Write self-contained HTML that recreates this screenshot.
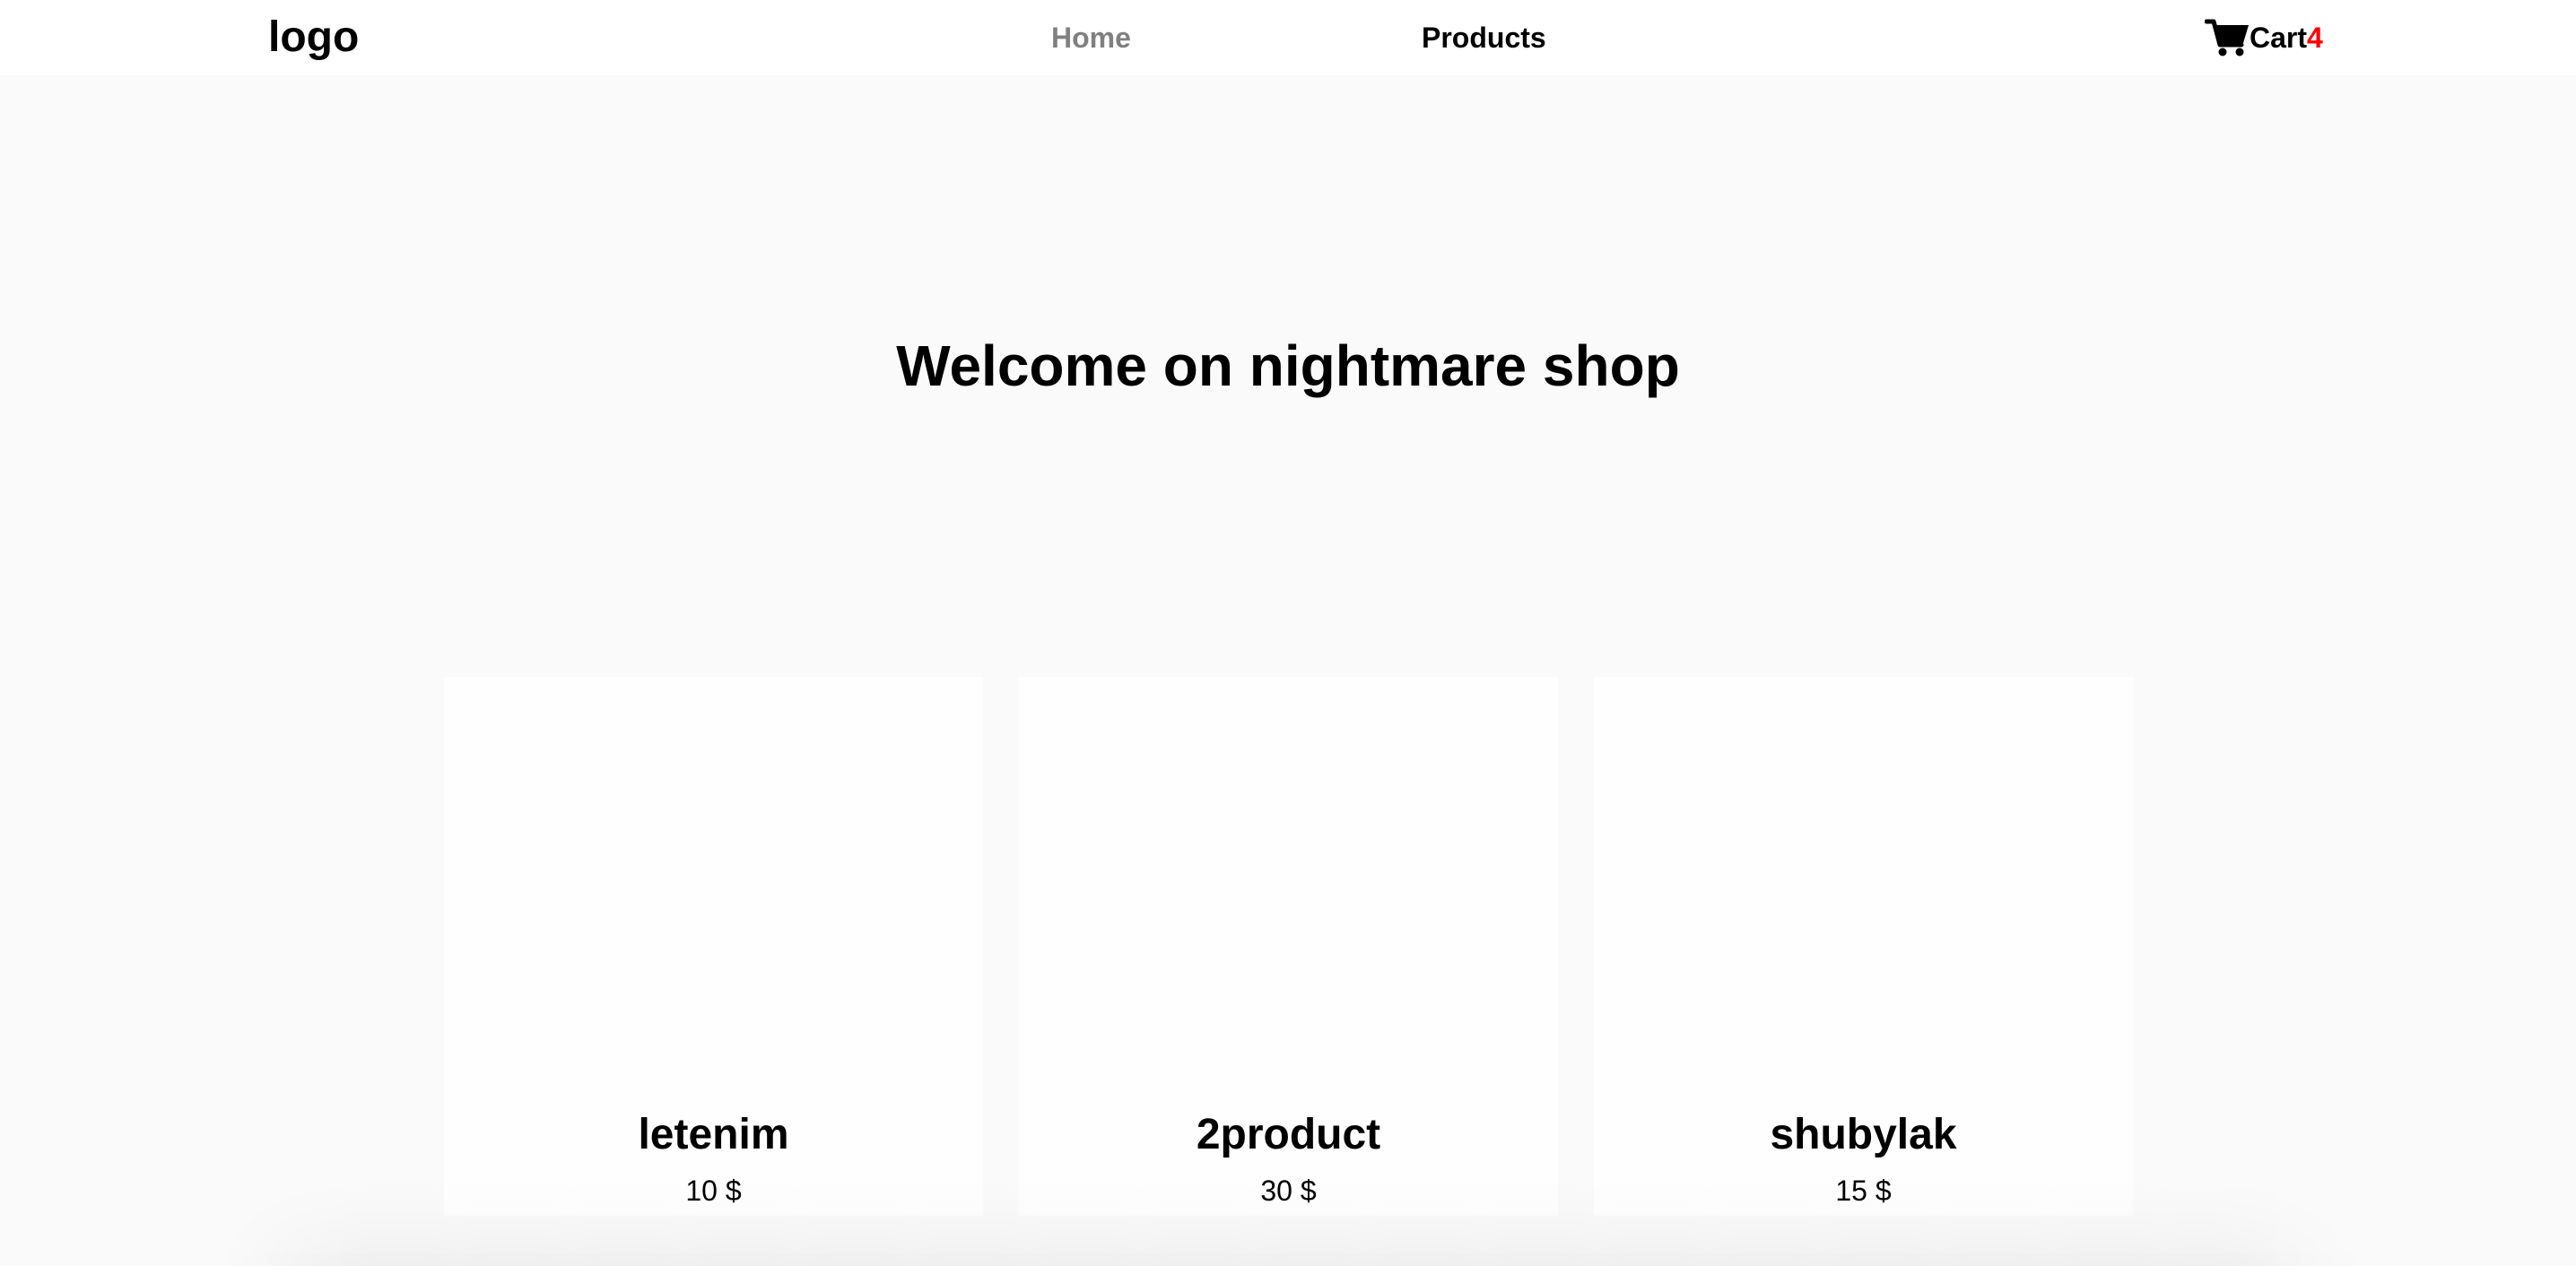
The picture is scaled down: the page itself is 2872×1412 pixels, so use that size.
<!DOCTYPE html>
<html><head><style>
html,body{margin:0;padding:0;width:2872px;height:1412px;overflow:hidden;}
body{background:#fafafa;font-family:"Liberation Sans",Arial,sans-serif;}
#w{position:relative;width:2872px;height:1412px;overflow:hidden;}
nav{position:absolute;left:0;top:0;width:2872px;height:84px;background:#fff;}
.logo{position:absolute;left:299px;top:14px;font-size:48px;font-weight:bold;line-height:56px;}
.nl{position:absolute;top:22px;font-size:32px;font-weight:bold;line-height:40px;}
h1{position:absolute;left:0;width:2872px;top:368px;margin:0;text-align:center;font-size:64px;line-height:80px;font-weight:bold;}
.card{position:absolute;top:755px;width:601px;height:601px;background:#fefefe;text-align:center;}
.t{font-size:48px;font-weight:bold;line-height:60px;position:absolute;left:0;right:0;top:481px;}
.p{font-size:32px;line-height:40px;position:absolute;left:0;right:0;top:553px;}
.sh{position:absolute;left:330px;right:330px;top:1430px;height:200px;background:#eee;box-shadow:0 0 110px 10px rgba(0,0,0,0.14);}
</style></head><body><div id="w">
<nav>
<div class="logo">logo</div>
<div class="nl" style="left:1172px;color:#808080">Home</div>
<div class="nl" style="left:1585px;">Products</div>
<svg style="position:absolute;left:2458px;top:20px" width="50" height="44" viewBox="0 0 50 44"><path d="M2 4h8l7 26h24" fill="none" stroke="#000" stroke-width="5" stroke-linecap="round" stroke-linejoin="round"/><path d="M11 8h38l-6 20H16z" fill="#000"/><circle cx="20" cy="38" r="4.5"/><circle cx="39" cy="38" r="4.5"/></svg>
<div class="nl" style="left:2508px;">Cart<span style="color:#f00">4</span></div>
</nav>
<h1>Welcome on nightmare shop</h1>
<div class="card" style="left:495px"><div class="t">letenim</div><div class="p">10 $</div></div>
<div class="card" style="left:1136px"><div class="t">2product</div><div class="p">30 $</div></div>
<div class="card" style="left:1777px"><div class="t">shubylak</div><div class="p">15 $</div></div>
<div class="sh"></div>
</div></body></html>
